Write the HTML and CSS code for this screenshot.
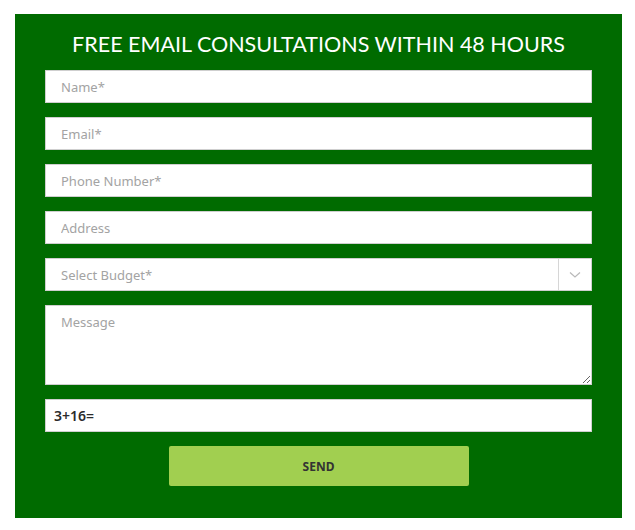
FILE: index.html
```html
<!DOCTYPE html>
<html lang="en">

<head>
    <meta charset="UTF-8">
    <meta name="viewport" content="width=device-width, initial-scale=1.0">
    <title>Free Email Consultation</title>
    <link rel="stylesheet" href="styles.css">
</head>

<body>
    <!-- consultation form box -->
    <form action="#" method="post" class="consult-form">
        <h2 class="consult-title">FREE EMAIL CONSULTATIONS WITHIN 48 HOURS</h2>

        <input type="text" name="name" class="field" placeholder="Name*">
        <input type="email" name="email" class="field" placeholder="Email*">
        <input type="text" name="phone" class="field" placeholder="Phone Number*">
        <input type="text" name="address" class="field" placeholder="Address">

        <!-- budget dropdown with its arrow box -->
        <div class="select-wrap">
            <select name="budget" class="select">
                <option value="">Select Budget*</option>
                <option value="1">Under $5,000</option>
                <option value="2">$5,000 - $10,000</option>
                <option value="3">Over $10,000</option>
            </select>
            <span class="select-arrow">
                <svg width="12" height="8" viewBox="0 0 12 8">
                    <path d="M1 1.5 L6 6 L11 1.5" fill="none" stroke="#b9b9b9" stroke-width="1.2" />
                </svg>
            </span>
        </div>

        <textarea name="message" class="field message" placeholder="Message"></textarea>

        <div class="captcha">
            <span class="captcha-q">3+16=</span>
            <input type="text" name="captcha" class="captcha-input">
        </div>

        <button type="submit" class="send">SEND</button>
    </form>
</body>

</html>
```

FILE: styles.css
```css
body {
    margin: 0;
    padding: 14px 13px 12px 15px;
    background: #fff;
    font-family: "Noto Sans", "Open Sans", sans-serif;
}

.consult-form {
    width: 607px;
    box-sizing: border-box;
    background-color: #006b00;
    padding: 14px 30px 32px;
    display: flex;
    flex-direction: column;
    gap: 14px;
}

.consult-title {
    margin: 0 0 -4px;
    color: #fff;
    font-family: "Lato", sans-serif;
    font-weight: 400;
    font-size: 21.5px;
    line-height: 32px;
    text-align: center;
}

/* text inputs */
.field {
    height: 33px;
    box-sizing: border-box;
    border: 1px solid #cfcfcf;
    background: #fff;
    padding: 0 15px;
    font-family: "Noto Sans", "Open Sans", sans-serif;
    font-size: 13px;
    color: #333;
    outline: none;
    margin: 0;
}

.field::placeholder {
    color: #a3a3a3;
}

.select-wrap {
    display: flex;
    height: 33px;
    box-sizing: border-box;
    border: 1px solid #cfcfcf;
    background: #fff;
}

.select {
    flex: 1;
    appearance: none;
    border: none;
    background: transparent;
    padding: 0 15px;
    font-family: "Noto Sans", "Open Sans", sans-serif;
    font-size: 13px;
    color: #a3a3a3;
    outline: none;
}

.select-arrow {
    width: 32px;
    border-left: 1px solid #d6d6d6;
    display: flex;
    align-items: center;
    justify-content: center;
}

.message {
    height: 80px;
    padding-top: 7px;
    resize: vertical;
}

/* captcha question */
.captcha {
    display: flex;
    align-items: center;
    height: 33px;
    box-sizing: border-box;
    border: 1px solid #cfcfcf;
    background: #fff;
    padding-left: 8px;
}

.captcha-q {
    font-size: 14px;
    font-weight: 600;
    color: #2b2b2b;
}

.captcha-input {
    flex: 1;
    height: 100%;
    border: none;
    outline: none;
    padding: 0 4px;
    background: transparent;
}

.send {
    align-self: center;
    width: 300px;
    height: 40px;
    background-color: #a1cf50;
    border: none;
    border-radius: 2px;
    font-family: "Noto Sans", "Open Sans", sans-serif;
    font-size: 12px;
    font-weight: 700;
    color: #333;
    cursor: pointer;
}
```
